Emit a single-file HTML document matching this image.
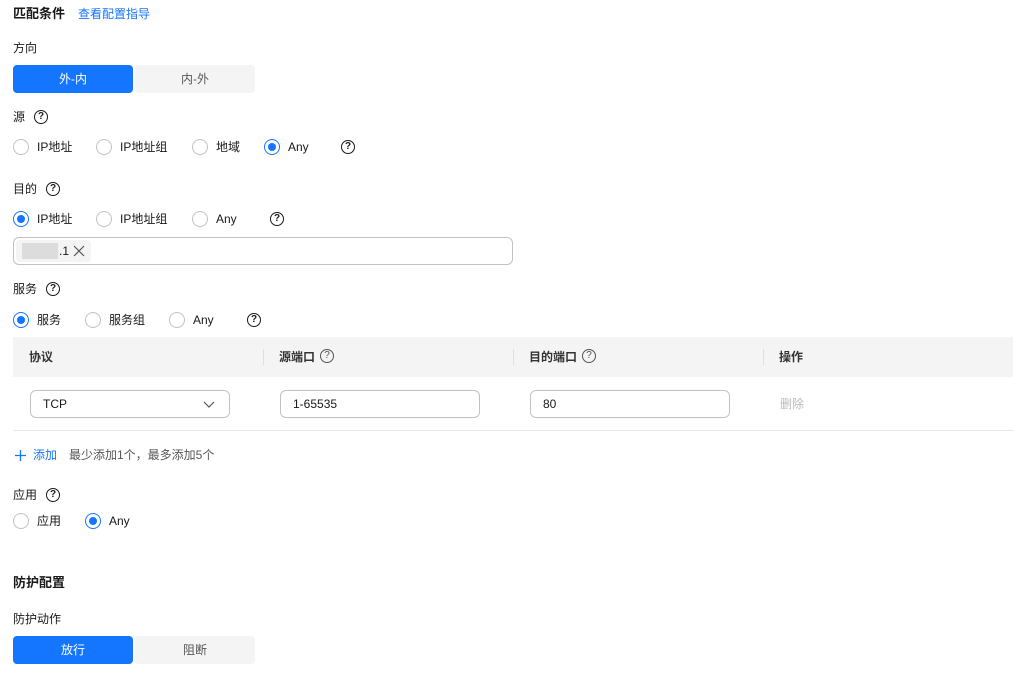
<!DOCTYPE html>
<html><head><meta charset="utf-8">
<style>
*{margin:0;padding:0;box-sizing:border-box}
body{width:1022px;height:676px;background:#fff;position:relative;overflow:hidden;font-family:"Liberation Sans","Noto Sans CJK SC",sans-serif;font-size:12px;color:#191919}
.a{position:absolute;white-space:nowrap;line-height:16px;height:16px}
.b{font-weight:bold;font-size:13px}
.r{position:absolute;width:16px;height:16px;border:1px solid #c2c2c2;border-radius:50%;background:#fff}
.r.on{border-color:#1476ff}
.r.on::after{content:"";position:absolute;left:3px;top:3px;width:8px;height:8px;border-radius:50%;background:#1476ff}
.q{position:absolute;width:14px;height:14px;border:1.3px solid #191919;border-radius:50%;font-size:10px;line-height:11px;text-align:center;font-weight:bold}
.seg{position:absolute;height:28px;line-height:28px;text-align:center;border-radius:4px;font-size:12px}
.in{position:absolute;border:1px solid #c2c2c2;border-radius:6px;background:#fff;height:28px;line-height:26px;padding-left:12px}
.sep{position:absolute;top:349px;width:1px;height:16px;background:#dfdfdf}
</style></head><body>
<div class="a b" style="left:13px;top:6px">匹配条件</div>
<div class="a" style="left:78px;top:6px;color:#1476ff">查看配置指导</div>

<div class="a" style="left:13px;top:40px">方向</div>
<div class="seg" style="left:13px;top:65px;width:120px;background:#1476ff;color:#fff">外-内</div>
<div class="seg" style="left:135px;top:65px;width:120px;background:#f4f4f4;color:#575757">内-外</div>

<div class="a" style="left:13px;top:109px">源</div><div class="q" style="left:34px;top:110px">?</div>
<div class="r" style="left:13px;top:139px"></div><div class="a" style="left:37px;top:139px">IP地址</div>
<div class="r" style="left:96px;top:139px"></div><div class="a" style="left:120px;top:139px">IP地址组</div>
<div class="r" style="left:192px;top:139px"></div><div class="a" style="left:216px;top:139px">地域</div>
<div class="r on" style="left:264px;top:139px"></div><div class="a" style="left:288px;top:139px">Any</div>
<div class="q" style="left:341px;top:140px">?</div>

<div class="a" style="left:13px;top:181px">目的</div><div class="q" style="left:46px;top:182px">?</div>
<div class="r on" style="left:13px;top:211px"></div><div class="a" style="left:37px;top:211px">IP地址</div>
<div class="r" style="left:96px;top:211px"></div><div class="a" style="left:120px;top:211px">IP地址组</div>
<div class="r" style="left:192px;top:211px"></div><div class="a" style="left:216px;top:211px">Any</div>
<div class="q" style="left:270px;top:212px">?</div>
<div class="in" style="left:13px;top:237px;width:500px"></div>
<div style="position:absolute;left:16px;top:240px;width:75px;height:22px;background:#f4f4f4;border-radius:4px"></div>
<div style="position:absolute;left:22px;top:243px;width:36px;height:16px;background:#dcdcdc"></div>
<div class="a" style="left:59px;top:243px">.1</div>
<svg style="position:absolute;left:73px;top:245px" width="12" height="12"><path d="M1 1L11 11M11 1L1 11" stroke="#575757" stroke-width="1.2"/></svg>

<div class="a" style="left:13px;top:281px">服务</div><div class="q" style="left:46px;top:282px">?</div>
<div class="r on" style="left:13px;top:312px"></div><div class="a" style="left:37px;top:312px">服务</div>
<div class="r" style="left:85px;top:312px"></div><div class="a" style="left:109px;top:312px">服务组</div>
<div class="r" style="left:169px;top:312px"></div><div class="a" style="left:193px;top:312px">Any</div>
<div class="q" style="left:247px;top:313px">?</div>

<div style="position:absolute;left:13px;top:337px;width:1000px;height:40px;background:#f4f4f4"></div>
<div class="a" style="left:29px;top:349px;font-weight:bold;color:#333">协议</div>
<div class="sep" style="left:263px"></div>
<div class="a" style="left:279px;top:349px;font-weight:bold;color:#333">源端口</div><div class="q" style="left:320px;top:349px;border-color:#555;color:#555;font-weight:normal">?</div>
<div class="sep" style="left:513px"></div>
<div class="a" style="left:529px;top:349px;font-weight:bold;color:#333">目的端口</div><div class="q" style="left:582px;top:349px;border-color:#555;color:#555;font-weight:normal">?</div>
<div class="sep" style="left:763px"></div>
<div class="a" style="left:779px;top:349px;font-weight:bold;color:#333">操作</div>
<div style="position:absolute;left:13px;top:430px;width:1000px;height:1px;background:#eaeaea"></div>
<div class="in" style="left:30px;top:390px;width:200px">TCP</div>
<svg style="position:absolute;left:203px;top:399px" width="12" height="10"><path d="M1 3L6 8L11 3" stroke="#575757" stroke-width="1.2" fill="none"/></svg>
<div class="in" style="left:280px;top:390px;width:200px">1-65535</div>
<div class="in" style="left:530px;top:390px;width:200px">80</div>
<div class="a" style="left:780px;top:396px;color:#bbb">删除</div>

<svg style="position:absolute;left:14px;top:449px" width="13" height="13"><path d="M6.5 1V12M1 6.5H12" stroke="#1476ff" stroke-width="1.3"/></svg>
<div class="a" style="left:33px;top:447px;color:#1476ff">添加</div>
<div class="a" style="left:69px;top:447px;color:#575757">最少添加1个，最多添加5个</div>

<div class="a" style="left:13px;top:487px">应用</div><div class="q" style="left:46px;top:488px">?</div>
<div class="r" style="left:13px;top:513px"></div><div class="a" style="left:37px;top:513px">应用</div>
<div class="r on" style="left:85px;top:513px"></div><div class="a" style="left:109px;top:513px">Any</div>

<div class="a b" style="left:13px;top:575px">防护配置</div>
<div class="a" style="left:13px;top:611px">防护动作</div>
<div class="seg" style="left:13px;top:636px;width:120px;background:#1476ff;color:#fff">放行</div>
<div class="seg" style="left:135px;top:636px;width:120px;background:#f4f4f4;color:#575757">阻断</div>
</body></html>
